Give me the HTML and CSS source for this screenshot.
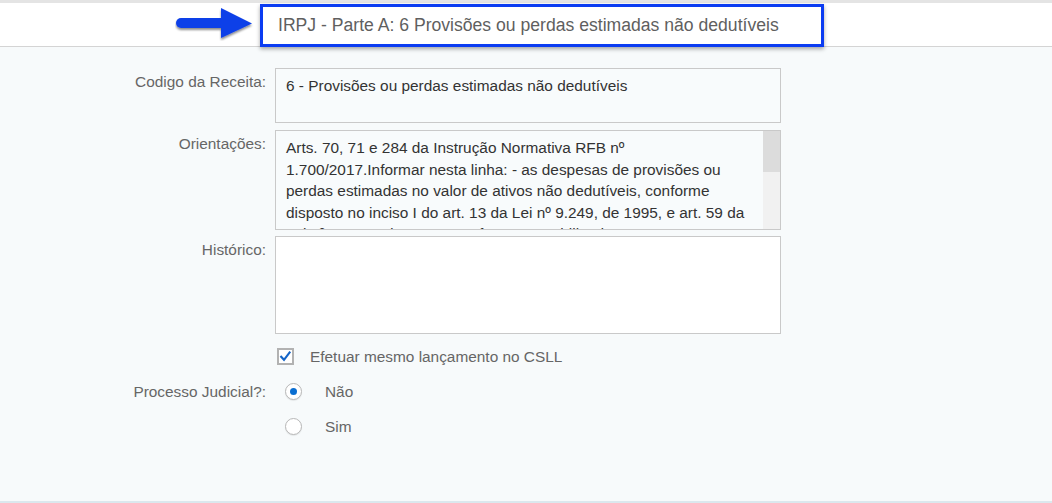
FILE: index.html
```html
<!DOCTYPE html>
<html lang="pt-BR">
<head>
<meta charset="utf-8">
<title>IRPJ - Parte A</title>
<link rel="stylesheet" href="styles.css">
</head>
<body>
<div class="topbar"></div>
<header class="header">
  <svg class="arrow" width="80" height="34" viewBox="0 0 80 34" aria-hidden="true">
    <defs>
      <filter id="sh" x="-10%" y="-20%" width="130%" height="160%">
        <feDropShadow dx="0" dy="2" stdDeviation="1.2" flood-color="#000" flood-opacity="0.45"/>
      </filter>
    </defs>
    <g filter="url(#sh)">
      <rect x="1" y="11" width="50" height="10" rx="5" fill="#0d3fe8"/>
      <polygon points="46,1 77,16.5 46,31" fill="#0d3fe8"/>
    </g>
  </svg>
  <div class="title-box">IRPJ - Parte A: 6 Provisões ou perdas estimadas não dedutíveis</div>
</header>
<main class="page">
  <div class="form">
    <div class="row">
      <div class="label">Codigo da Receita:</div>
      <div class="field field-code">6 - Provisões ou perdas estimadas não dedutíveis</div>
    </div>
    <div class="row row-gap7">
      <div class="label">Orientações:</div>
      <div class="field field-orient">
        <div class="orient-text">Arts. 70, 71 e 284 da Instrução Normativa RFB nº 1.700/2017.Informar nesta linha: - as despesas de provisões ou perdas estimadas no valor de ativos não dedutíveis, conforme disposto no inciso I do art. 13 da Lei nº 9.249, de 1995, e art. 59 da Lei nº 12.973, de 2014, que forem contabilizadas como custo ou despesa no período de apuração.</div>
        <div class="scrollbar"><div class="scroll-thumb"></div></div>
      </div>
    </div>
    <div class="row row-gap6">
      <div class="label">Histórico:</div>
      <div class="field field-hist"></div>
    </div>
    <div class="row row-opt row-first-opt">
      <div class="label"></div>
      <div class="opt opt-check">
        <span class="checkbox">
          <svg width="13" height="13" viewBox="0 0 13 13" aria-hidden="true"><path d="M2.2 6.8 L5 9.8 L10.6 2.4" fill="none" stroke="#1565c8" stroke-width="2.1" stroke-linecap="square"/></svg>
        </span>
        <span class="opt-text">Efetuar mesmo lançamento no CSLL</span>
      </div>
    </div>
    <div class="row row-opt">
      <div class="label">Processo Judicial?:</div>
      <div class="opt opt-radio">
        <span class="radio radio-on"></span>
        <span class="opt-text">Não</span>
      </div>
    </div>
    <div class="row row-opt">
      <div class="label"></div>
      <div class="opt opt-radio">
        <span class="radio"></span>
        <span class="opt-text">Sim</span>
      </div>
    </div>
  </div>
</main>
</body>
</html>
```
FILE: styles.css
```css
* { box-sizing: border-box; }

html, body {
  margin: 0;
  padding: 0;
  height: 503px;
  overflow: hidden;
  background: #f7fafb;
  font-family: "Liberation Sans", Arial, sans-serif;
}

.topbar {
  height: 3px;
  background: #e4e4e4;
}

.header {
  height: 44px;
  background: #ffffff;
  border-bottom: 1px solid #d4d4d4;
  display: flex;
  align-items: flex-start;
  padding-left: 175px;
}

.arrow {
  margin-top: 4px;
  display: block;
}

.title-box {
  margin-left: 5px;
  margin-top: 1px;
  width: 564px;
  height: 43px;
  border: 3px solid #0b3cf2;
  background: #ffffff;
  box-shadow: 0 2px 4px rgba(0, 0, 0, 0.35);
  display: flex;
  align-items: center;
  padding-left: 15px;
  padding-bottom: 1px;
  font-size: 17.6px;
  color: #5f5f5f;
  white-space: nowrap;
  position: relative;
  z-index: 1;
}

.page {
  height: 456px;
  background: #f7fafb;
  border-bottom: 2px solid #dbe8ee;
  padding-top: 21px;
}

.form {
  display: flex;
  flex-direction: column;
}

.row {
  display: flex;
  gap: 9px;
}

.row-gap7 { margin-top: 7px; }
.row-gap6 { margin-top: 6px; }

.label {
  width: 266px;
  flex: none;
  text-align: right;
  font-size: 15.4px;
  line-height: 20px;
  padding-top: 4px;
  color: #666666;
}

.field {
  width: 506px;
  border: 1px solid #c9c9c9;
  background: #f8fbfc;
  font-size: 15.4px;
  line-height: 21.5px;
  color: #333333;
  padding: 6px 10px;
}

.field-code { height: 55px; }

.field-orient {
  height: 100px;
  padding: 0;
  display: flex;
}

.orient-text {
  flex: 1;
  height: 98px;
  overflow: hidden;
  padding: 6px 7px 0 10px;
}

.scrollbar {
  width: 17px;
  flex: none;
  height: 98px;
  background: #f1f1f1;
}

.scroll-thumb {
  height: 41px;
  background: #dcdcdc;
}

.field-hist {
  height: 98px;
  background: #ffffff;
}

.row-opt {
  height: 35px;
  align-items: center;
}

.row-first-opt { margin-top: 5px; }

.row-opt .label {
  padding-top: 0;
}

.opt {
  display: flex;
  align-items: center;
  font-size: 15.4px;
  color: #666666;
}

.opt-check {
  padding-left: 2px;
  gap: 16px;
}

.checkbox {
  width: 17px;
  height: 17px;
  border: 2px solid #b2b2b2;
  background: #ffffff;
  display: flex;
  align-items: center;
  justify-content: center;
}

.checkbox svg { display: block; }

.opt-radio {
  padding-left: 10px;
  gap: 23px;
}

.radio {
  width: 17px;
  height: 17px;
  border-radius: 50%;
  border: 1px solid #b8b8b8;
  background: #ffffff;
  box-shadow: 0 1px 1px rgba(0, 0, 0, 0.08);
  display: flex;
  align-items: center;
  justify-content: center;
}

.radio-on::after {
  content: "";
  width: 7px;
  height: 7px;
  border-radius: 50%;
  background: #0a6ed1;
}
```
